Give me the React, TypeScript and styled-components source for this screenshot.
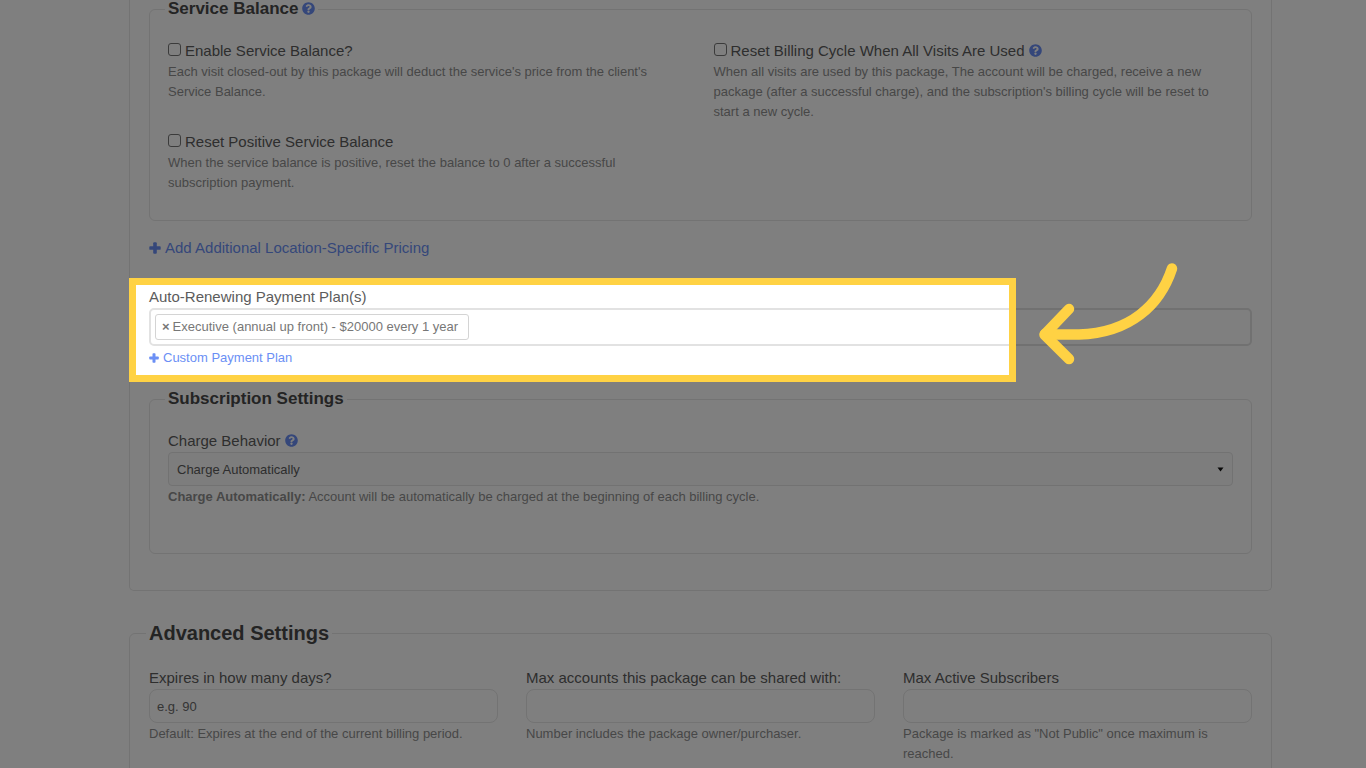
import React, { useState } from "react";
import styled, { createGlobalStyle } from "styled-components";
import { FaQuestionCircle } from "react-icons/fa";

const GlobalStyle = createGlobalStyle`
  * { box-sizing: border-box; }
  body {
    margin: 0;
    background: #fff;
    color: #5c5c5c;
    font-family: "Liberation Sans", Arial, Helvetica, sans-serif;
    font-size: 15px;
    line-height: 22px;
  }
`;

const Page = styled.main`
  height: 100vh;
  overflow: hidden;
  padding: 0 94px 0 129px;
`;

const Card = styled.section`
  border: 1px solid #e6e6e6;
  border-top: 0;
  border-radius: 0 0 5px 5px;
  padding: 0 19px 36px;
`;

const Group = styled.fieldset<{ $bottom: number; $wide?: boolean }>`
  min-width: 0;
  margin: 0;
  border: 1px solid #e6e6e6;
  border-radius: 6px;
  padding: ${(p) => (p.$wide ? "23px 19px" : "22px 18px")} ${(p) => p.$bottom}px;
`;

const Legend = styled.legend<{ $large?: boolean }>`
  display: flex;
  align-items: center;
  gap: 4px;
  margin-left: -3px;
  padding: 0 3px;
  color: #484848;
  font-weight: bold;
  font-size: ${(p) => (p.$large ? 20 : 17)}px;
  line-height: ${(p) => (p.$large ? 22 : 18)}px;
`;

const TwoColumns = styled.div`
  display: grid;
  grid-template-columns: 1fr 1fr;
  gap: 9px 26px;
`;

const ThreeColumns = styled.div`
  display: grid;
  grid-template-columns: repeat(3, 1fr);
  gap: 28px;
`;

const CheckRow = styled.div`
  display: flex;
  align-items: center;
  gap: 4px;
`;

const CheckBox = styled.input`
  appearance: none;
  width: 13px;
  height: 13px;
  margin: 0 0 4px;
  border: 1px solid #767676;
  border-radius: 3px;
  background: #fff;
`;

const FieldLabel = styled.label`
  display: block;
`;

const LabelRow = styled.div`
  display: flex;
  align-items: center;
  gap: 4px;
`;

const Help = styled.p`
  margin: 0;
  color: #8f8f8f;
  font-size: 13px;
  line-height: 20px;
`;

const FieldHelp = styled(Help)`
  margin-top: 1px;
`;

const HelpButton = styled.button`
  display: flex;
  margin: 0 0 2px;
  padding: 0;
  border: 0;
  background: none;
  color: #6b8ff5;
  font-size: 13px;
`;

const ActionLink = styled.a<{ $small?: boolean }>`
  display: flex;
  align-items: center;
  gap: 4px;
  width: fit-content;
  color: #6b8ff5;
  text-decoration: none;
  font-size: ${(p) => (p.$small ? 13 : 15)}px;
  line-height: ${(p) => (p.$small ? 20 : 22)}px;
`;

const PricingRow = styled.div`
  margin: 16px 0 27px;
`;

const PlanSection = styled.div`
  position: relative;
  margin-bottom: 22px;
`;

const PlanBox = styled.div`
  display: flex;
  align-items: center;
  height: 38px;
  margin-bottom: 2px;
  border: 2px solid #e2e2e2;
  border-radius: 5px;
  padding: 0 4px;
`;

const Chip = styled.span`
  display: flex;
  align-items: center;
  gap: 3px;
  height: 26px;
  border: 1px solid #d4d4d4;
  border-radius: 3px;
  padding: 0 10px 0 6px;
  color: #777;
  font-size: 13px;
`;

const ChipRemove = styled.button`
  padding: 0;
  border: 0;
  background: none;
  color: #777;
  font: inherit;
  font-weight: bold;
`;

const Spotlight = styled.div`
  position: absolute;
  z-index: 1;
  top: -8px;
  bottom: -14px;
  left: -20px;
  right: 236px;
  border: 7px solid #ffd244;
  box-shadow: 0 0 0 9999px rgba(0, 0, 0, 0.5);
  pointer-events: none;
`;

const Arrow = styled.svg`
  position: absolute;
  z-index: 2;
  top: -26px;
  right: 72px;
  width: 144px;
  height: 108px;
  pointer-events: none;
`;

const SelectWrap = styled.div`
  position: relative;
`;

const Select = styled.select`
  appearance: none;
  display: block;
  width: 100%;
  height: 34px;
  border: 1px solid #e4e4e4;
  border-radius: 4px;
  padding: 0 8px;
  background: #fafafa;
  color: #5c5c5c;
  font: 13px "Liberation Sans", Arial, sans-serif;
`;

const Caret = styled.svg`
  position: absolute;
  top: 15px;
  right: 9px;
  width: 7px;
  height: 5px;
  pointer-events: none;
`;

const TextInput = styled.input`
  display: block;
  width: 100%;
  height: 34px;
  border: 1px solid #e6e6e6;
  border-radius: 8px;
  padding: 0 7px;
  background: #fff;
  color: #5c5c5c;
  font: 13px "Liberation Sans", Arial, sans-serif;
  &::placeholder { color: #6a6a6a; opacity: 1; }
`;

const AdvancedArea = styled.div`
  margin-top: 31px;
`;

function PlusIcon({ size }: { size: number }) {
  return (
    <svg width={size} height={size} viewBox="0 0 12 12" fill="currentColor" aria-hidden="true">
      <rect x="4.200" y="0.300" width="3.600" height="11.400" rx="0.900" />
      <rect x="0.300" y="4.200" width="11.400" height="3.600" rx="0.900" />
    </svg>
  );
}

function HelpIcon({ topic }: { topic: string }) {
  return (
    <HelpButton type="button" aria-label={`Help: ${topic}`}>
      <FaQuestionCircle />
    </HelpButton>
  );
}

interface CheckOptionProps {
  id: string;
  label: string;
  help: string;
  hasInfo?: boolean;
}

function CheckOption({ id, label, help, hasInfo }: CheckOptionProps) {
  return (
    <div>
      <CheckRow>
        <CheckBox type="checkbox" id={id} />
        <FieldLabel htmlFor={id}>{label}</FieldLabel>
        {hasInfo && <HelpIcon topic={label} />}
      </CheckRow>
      <Help>{help}</Help>
    </div>
  );
}

interface TextFieldProps {
  id: string;
  label: string;
  help: string;
  placeholder?: string;
}

function TextField({ id, label, help, placeholder }: TextFieldProps) {
  return (
    <div>
      <FieldLabel htmlFor={id}>{label}</FieldLabel>
      <TextInput id={id} type="text" placeholder={placeholder} />
      <FieldHelp>{help}</FieldHelp>
    </div>
  );
}

export default function App() {
  const [plans, setPlans] = useState(["Executive (annual up front) - $20000 every 1 year"]);

  return (
    <>
      <GlobalStyle />
      <Page>
        <Card>
          <Group $bottom={27}>
            <Legend>
              Service Balance
              <HelpIcon topic="Service Balance" />
            </Legend>
            <TwoColumns>
              <CheckOption
                id="enable-balance"
                label="Enable Service Balance?"
                help="Each visit closed-out by this package will deduct the service's price from the client's Service Balance."
              />
              <CheckOption
                id="reset-cycle"
                label="Reset Billing Cycle When All Visits Are Used"
                help="When all visits are used by this package, The account will be charged, receive a new package (after a successful charge), and the subscription's billing cycle will be reset to start a new cycle."
                hasInfo
              />
              <CheckOption
                id="reset-positive"
                label="Reset Positive Service Balance"
                help="When the service balance is positive, reset the balance to 0 after a successful subscription payment."
              />
            </TwoColumns>
          </Group>

          <PricingRow>
            <ActionLink href="#pricing">
              <PlusIcon size={12} />
              Add Additional Location-Specific Pricing
            </ActionLink>
          </PricingRow>

          <PlanSection>
            <FieldLabel as="div" id="plans-label">Auto-Renewing Payment Plan(s)</FieldLabel>
            <PlanBox role="group" aria-labelledby="plans-label">
              {plans.map((plan) => (
                <Chip key={plan}>
                  <ChipRemove
                    type="button"
                    aria-label={`Remove ${plan}`}
                    onClick={() => setPlans(plans.filter((p) => p !== plan))}
                  >
                    ×
                  </ChipRemove>
                  {plan}
                </Chip>
              ))}
            </PlanBox>
            <ActionLink href="#custom-plan" $small>
              <PlusIcon size={10} />
              Custom Payment Plan
            </ActionLink>
            <Spotlight />
            <Arrow viewBox="0 0 144 108" fill="none" stroke="#ffd244" strokeWidth="10.5" strokeLinecap="round" strokeLinejoin="round" aria-hidden="true">
              <path d="M136 8.500C124 45 94 73 43 74.500C31 74.800 20 74.500 9 74" />
              <path d="M33 49L8.500 74.700L33 99" />
            </Arrow>
          </PlanSection>

          <Group $bottom={46}>
            <Legend>Subscription Settings</Legend>
            <LabelRow>
              <FieldLabel htmlFor="charge-behavior">Charge Behavior</FieldLabel>
              <HelpIcon topic="Charge Behavior" />
            </LabelRow>
            <SelectWrap>
              <Select id="charge-behavior" defaultValue="auto">
                <option value="auto">Charge Automatically</option>
              </Select>
              <Caret viewBox="0 0 7 5" aria-hidden="true">
                <path d="M0.500 0.500H6.500L3.500 4.500Z" fill="#111" />
              </Caret>
            </SelectWrap>
            <FieldHelp>
              <strong>Charge Automatically:</strong> Account will be automatically be charged at the beginning of each billing cycle.
            </FieldHelp>
          </Group>
        </Card>

        <AdvancedArea>
          <Group $bottom={27} $wide>
            <Legend $large>Advanced Settings</Legend>
            <ThreeColumns>
              <TextField
                id="expires"
                label="Expires in how many days?"
                placeholder="e.g. 90"
                help="Default: Expires at the end of the current billing period."
              />
              <TextField
                id="max-accounts"
                label="Max accounts this package can be shared with:"
                help="Number includes the package owner/purchaser."
              />
              <TextField
                id="max-subscribers"
                label="Max Active Subscribers"
                help={'Package is marked as "Not Public" once maximum is reached.'}
              />
            </ThreeColumns>
          </Group>
        </AdvancedArea>
      </Page>
    </>
  );
}
